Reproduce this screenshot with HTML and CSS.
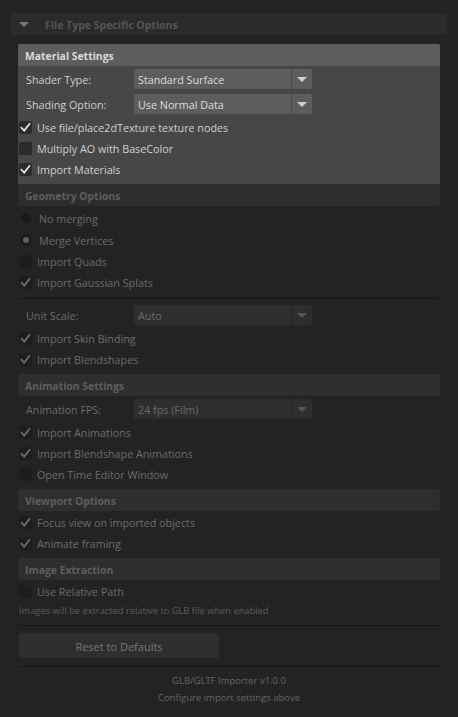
FILE: index.html
```html
<!DOCTYPE html>
<html lang="en">
<head>
<meta charset="utf-8">
<title>GLB/GLTF Importer</title>
<link rel="stylesheet" href="styles.css">
</head>
<body>
<div class="panel">
  <div class="frame-header">
    <span class="tri"></span>
    <span class="frame-title">File Type Specific Options</span>
  </div>

  <div class="content">
    <section class="group active">
      <div class="group-header">Material Settings</div>
      <div class="group-body body-material">
        <div class="field">
          <span class="field-label">Shader Type:</span>
          <div class="combo"><span class="combo-value">Standard Surface</span><span class="combo-btn"><i class="arrow"></i></span></div>
        </div>
        <div class="field">
          <span class="field-label">Shading Option:</span>
          <div class="combo"><span class="combo-value">Use Normal Data</span><span class="combo-btn"><i class="arrow"></i></span></div>
        </div>
        <div class="check on"><span class="box"><svg viewBox="0 0 13 13"><polyline points="2.5,6.8 5.2,9.6 10.5,3"/></svg></span><span class="text">Use file/place2dTexture texture nodes</span></div>
        <div class="check"><span class="box"></span><span class="text">Multiply AO with BaseColor</span></div>
        <div class="check on"><span class="box"><svg viewBox="0 0 13 13"><polyline points="2.5,6.8 5.2,9.6 10.5,3"/></svg></span><span class="text">Import Materials</span></div>
      </div>
    </section>

    <section class="group">
      <div class="group-header">Geometry Options</div>
      <div class="group-body">
        <div class="radio"><span class="dot"></span><span class="text">No merging</span></div>
        <div class="radio selected"><span class="dot"></span><span class="text">Merge Vertices</span></div>
        <div class="check"><span class="box"></span><span class="text">Import Quads</span></div>
        <div class="check on"><span class="box"><svg viewBox="0 0 13 13"><polyline points="2.5,6.8 5.2,9.6 10.5,3"/></svg></span><span class="text">Import Gaussian Splats</span></div>
        <div class="sep sep-inner"></div>
        <div class="field">
          <span class="field-label">Unit Scale:</span>
          <div class="combo"><span class="combo-value">Auto</span><span class="combo-btn"><i class="arrow"></i></span></div>
        </div>
        <div class="check on"><span class="box"><svg viewBox="0 0 13 13"><polyline points="2.5,6.8 5.2,9.6 10.5,3"/></svg></span><span class="text">Import Skin Binding</span></div>
        <div class="check on"><span class="box"><svg viewBox="0 0 13 13"><polyline points="2.5,6.8 5.2,9.6 10.5,3"/></svg></span><span class="text">Import Blendshapes</span></div>
      </div>
    </section>

    <section class="group">
      <div class="group-header">Animation Settings</div>
      <div class="group-body">
        <div class="field">
          <span class="field-label">Animation FPS:</span>
          <div class="combo"><span class="combo-value">24 fps (Film)</span><span class="combo-btn"><i class="arrow"></i></span></div>
        </div>
        <div class="check on"><span class="box"><svg viewBox="0 0 13 13"><polyline points="2.5,6.8 5.2,9.6 10.5,3"/></svg></span><span class="text">Import Animations</span></div>
        <div class="check on"><span class="box"><svg viewBox="0 0 13 13"><polyline points="2.5,6.8 5.2,9.6 10.5,3"/></svg></span><span class="text">Import Blendshape Animations</span></div>
        <div class="check"><span class="box"></span><span class="text">Open Time Editor Window</span></div>
      </div>
    </section>

    <section class="group">
      <div class="group-header">Viewport Options</div>
      <div class="group-body">
        <div class="check on"><span class="box"><svg viewBox="0 0 13 13"><polyline points="2.5,6.8 5.2,9.6 10.5,3"/></svg></span><span class="text">Focus view on imported objects</span></div>
        <div class="check on"><span class="box"><svg viewBox="0 0 13 13"><polyline points="2.5,6.8 5.2,9.6 10.5,3"/></svg></span><span class="text">Animate framing</span></div>
      </div>
    </section>

    <section class="group">
      <div class="group-header">Image Extraction</div>
      <div class="group-body">
        <div class="check"><span class="box"></span><span class="text">Use Relative Path</span></div>
        <p class="info">Images will be extracted relative to GLB file when enabled</p>
      </div>
    </section>

    <div class="sep sep-outer"></div>
    <button class="reset" type="button">Reset to Defaults</button>
    <div class="sep sep-footer"></div>

    <footer class="footer">
      <div>GLB/GLTF Importer v1.0.0</div>
      <div>Configure import settings above</div>
    </footer>
  </div>
</div>
</body>
</html>
```

FILE: styles.css
```css
* { box-sizing: border-box; }

html, body {
  margin: 0;
  padding: 0;
  background: #232323;
  font-family: "Open Sans", "Noto Sans", "Liberation Sans", sans-serif;
  font-size: 10.75px;
  color: #6c6c6c;
}

.panel {
  padding: 13px 11px 0;
  width: 458px;
  height: 717px;
}

.frame-header {
  height: 22px;
  padding-top: 1px;
  background: #2b2b2b;
  border-radius: 3px;
  display: flex;
  align-items: center;
}

.tri {
  width: 0;
  height: 0;
  margin-left: 8px;
  margin-top: -1px;
  border-left: 5.5px solid transparent;
  border-right: 5.5px solid transparent;
  border-top: 5px solid #777777;
}

.frame-title {
  margin-left: 16px;
  font-weight: 700;
  color: #555555;
  font-size: 10.5px;
}

.content {
  margin: 9px 7px 0;
}

.group-header {
  height: 22px;
  line-height: 22px;
  padding-top: 1px;
  padding-left: 7px;
  font-weight: 700;
  font-size: 10.4px;
  background: #2e2e2e;
  color: #5e5e5e;
  border-radius: 2px;
}

.group-body {
  padding: 1px 0 4px;
}

.group.active .group-header {
  background: #5d5d5d;
  color: #dadada;
  border-radius: 2px 2px 0 0;
}

.group.active .group-body {
  background: #474747;
  color: #d0d0d0;
}

/* dropdown field */
.field {
  display: flex;
  align-items: center;
  height: 20px;
  margin: 2px 0 3px;
}

.field + .field { margin-top: 5px; }

.field-label {
  width: 116px;
  padding-left: 8px;
  padding-top: 2px;
}

.combo {
  width: 178px;
  height: 20px;
  display: flex;
  background: #2e2e2e;
  border-radius: 2px;
  color: #6a6a6a;
}

.combo-value {
  flex: 1;
  padding-left: 4px;
  padding-top: 1px;
  line-height: 20px;
  border-right: 1px solid #252525;
}

.combo-btn {
  width: 20px;
  display: flex;
  align-items: center;
  justify-content: center;
}

.arrow {
  display: block;
  width: 0;
  height: 0;
  border-left: 5px solid transparent;
  border-right: 5px solid transparent;
  border-top: 5px solid #555555;
  margin-top: 1px;
}

.group.active .combo {
  background: #5d5d5d;
  color: #dedede;
}
.group.active .combo-value { border-right-color: #4c4c4c; }
.group.active .arrow { border-top-color: #cfcfcf; }

/* checkbox */
.check {
  display: flex;
  align-items: center;
  height: 21px;
}

.box {
  width: 13px;
  height: 13px;
  margin-left: 1px;
  border-radius: 2px;
  background: #1d1d1d;
  display: flex;
}

.box svg {
  width: 13px;
  height: 13px;
  fill: none;
  stroke: #6e6e6e;
  stroke-width: 1.7;
  stroke-linecap: square;
}

.group.active .box { background: #2b2b2b; }
.group.active .box svg { stroke: #e8e8e8; }

.check .text { margin-left: 5px; padding-top: 1px; }

/* radio */
.radio {
  display: flex;
  align-items: center;
  height: 22px;
}

.dot {
  width: 10px;
  height: 10px;
  margin-left: 3px;
  border-radius: 50%;
  background: #1a1a1a;
  display: flex;
  align-items: center;
  justify-content: center;
}

.radio.selected .dot::after {
  content: "";
  width: 6px;
  height: 6px;
  border-radius: 50%;
  background: #5e5e5e;
}

.radio .text { margin-left: 8px; padding-top: 1px; }

/* separators */
.sep {
  height: 1px;
  background: #161616;
}

.sep-inner { margin: 5px 1px 6px 2px; }
.sep-outer { margin: 3px 0 0 1px; }
.sep-footer { margin: 8px 0 0 1px; }

.info {
  margin: 2px 0 0 1px;
  line-height: 14px;
  font-size: 9.3px;
  color: #5d5d5d;
}

.reset {
  display: block;
  margin: 7px 0 0 1px;
  width: 200px;
  height: 25px;
  border: 0;
  border-radius: 2px;
  background: #2e2e2e;
  color: #777777;
  font-family: inherit;
  font-size: 11px;
  padding: 1px 0 0;
}

.footer {
  margin-top: 5px;
  text-align: center;
  font-size: 9.5px;
  line-height: 17px;
  color: #666666;
}
```
